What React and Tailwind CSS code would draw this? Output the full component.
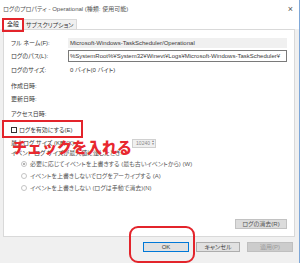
import React from 'react';

const font = { fontFamily: '"Liberation Sans", "Noto Sans CJK JP", sans-serif' };

function Row({ label, children, className = '' }) {
  return (
    <div className={`flex items-center ${className}`}>
      <div className="w-[57px] shrink-0 whitespace-nowrap">{label}</div>
      {children}
    </div>
  );
}

function Radio({ label, checked }) {
  return (
    <div className="flex items-center h-[10px] pl-[10px]">
      <span className="w-[6px] h-[6px] rounded-full border border-[#c4c4c4] bg-white flex items-center justify-center">
        {checked && <span className="w-[2px] h-[2px] rounded-full bg-[#9a9a9a]" />}
      </span>
      <span className="ml-[3px] whitespace-nowrap text-[#5a5a5a]">{label}</span>
    </div>
  );
}

export default function App() {
  return (
    <div
      className="relative w-[300px] h-[263px] overflow-hidden bg-[#f0f0f0] text-[6px] leading-none text-[#3a3a3a] border-r border-[#7ea7d8] [font-feature-settings:'palt']"
      style={font}
    >
      {/* Title bar */}
      <div className="h-[18px] bg-white flex items-center justify-between pl-[3px] pr-[6px]">
        <span className="whitespace-nowrap text-[#555]">ログのプロパティ - Operational (種類: 使用可能)</span>
        <span className="text-[9px] text-[#555] font-light">×</span>
      </div>

      {/* Tabs */}
      <div className="flex items-end h-[11px] pl-[3px] bg-white">
        <div className="h-[11px] w-[20px] bg-white border border-b-0 border-[#d9d9d9] flex items-center justify-center text-[#222]">全般</div>
        <div className="h-[10px] px-[3px] bg-[#f0f0f0] border border-b-0 border-l-0 border-[#d9d9d9] flex items-center whitespace-nowrap text-[#333]">サブスクリプション</div>
      </div>

      {/* Panel */}
      <div className="ml-[3px] w-[292px] h-[208px] bg-white border border-[#d9d9d9] pl-[7px] pr-[7px] flex flex-col">
        <Row label="フル ネーム(F):" className="mt-[8px] h-[10px]">
          <div className="w-[219px] h-[10px] bg-[#f0f0f0] flex items-center pl-[2px] whitespace-nowrap">
            Microsoft-Windows-TaskScheduler/Operational
          </div>
        </Row>
        <Row label="ログのパス(L):" className="mt-[2px] h-[12px]">
          <div className="w-[220px] h-[12px] border border-[#7a7a7a] flex items-center pl-[1px] whitespace-nowrap overflow-hidden">
            %SystemRoot%¥System32¥Winevt¥Logs¥Microsoft-Windows-TaskScheduler¥
          </div>
        </Row>
        <Row label="ログのサイズ:" className="mt-[2px] h-[12px]">
          <span className="pl-[2px]">0 バイト(0 バイト)</span>
        </Row>
        <Row label="作成日時:" className="mt-[4px] h-[12px]" />
        <Row label="更新日時:" className="mt-[1px] h-[12px]" />
        <Row label="アクセス日時:" className="mt-[3px] h-[12px]" />

        <div className="mt-[4px] h-[12px] flex items-center">
          <span className="w-[6px] h-[6px] border border-[#333] bg-white" />
          <span className="ml-[2px] whitespace-nowrap">ログを有効にする(E)</span>
        </div>

        <div className="mt-[2px] h-[10px] flex items-center">
          <div className="w-[121px] whitespace-nowrap">最大ログ サイズ (KB)(X):</div>
          <div className="w-[24px] h-[9px] bg-[#f0f0f0] border border-[#d0d0d0] flex items-center justify-end text-[#888] text-[5px]">
            <span className="pr-[1px]">10240</span>
            <span className="flex flex-col items-center justify-center w-[4px] h-full text-[3px] leading-[3px] text-[#777]">
              <span>▲</span>
              <span>▼</span>
            </span>
          </div>
        </div>
        <div className="h-[10px] flex items-center whitespace-nowrap">イベント ログ サイズが最大値に達したとき:</div>

        <div className="mt-[1px] flex flex-col gap-[2px]">
          <Radio checked label="必要に応じてイベントを上書きする (最も古いイベントから) (W)" />
          <Radio label="イベントを上書きしないでログをアーカイブする (A)" />
          <Radio label="イベントを上書きしない (ログは手動で消去)(N)" />
        </div>

        <div className="mt-[26px] flex justify-end">
          <div className="w-[52px] h-[10px] bg-[#dcdcdc] border border-[#c2c2c2] flex items-center justify-center text-[#555] whitespace-nowrap">
            ログの消去(R)
          </div>
        </div>
      </div>

      {/* Footer buttons */}
      <div className="mt-[5px] flex justify-end gap-[7px] pr-[6px]">
        <div className="w-[46px] h-[10px] bg-[#e1e1e1] border border-[#0078d7] flex items-center justify-center">OK</div>
        <div className="w-[44px] h-[10px] bg-[#e1e1e1] border border-[#adadad] flex items-center justify-center">キャンセル</div>
        <div className="w-[46px] h-[10px] bg-[#cccccc] border border-[#bfbfbf] flex items-center justify-center text-[#9a9a9a]">適用(P)</div>
      </div>

      {/* Annotations */}
      <div className="absolute left-[2px] top-[18px] w-[22px] h-[14px] border-2 border-[#e3242b]" />
      <div className="absolute left-[2px] top-[120px] w-[81px] h-[18px] border-2 border-[#e3242b]" />
      <div
        className="absolute left-[12px] top-[139px] text-[15px] leading-[15px] font-black text-[#e8282e] whitespace-nowrap [font-feature-settings:normal]"
        style={{ fontFamily: '"Noto Sans CJK JP", sans-serif' }}
      >
        チェックを入れる
      </div>
      <div className="absolute left-[129px] top-[226px] w-[66px] h-[37px] border-2 border-[#e3242b] rounded-[9px]" />
    </div>
  );
}
